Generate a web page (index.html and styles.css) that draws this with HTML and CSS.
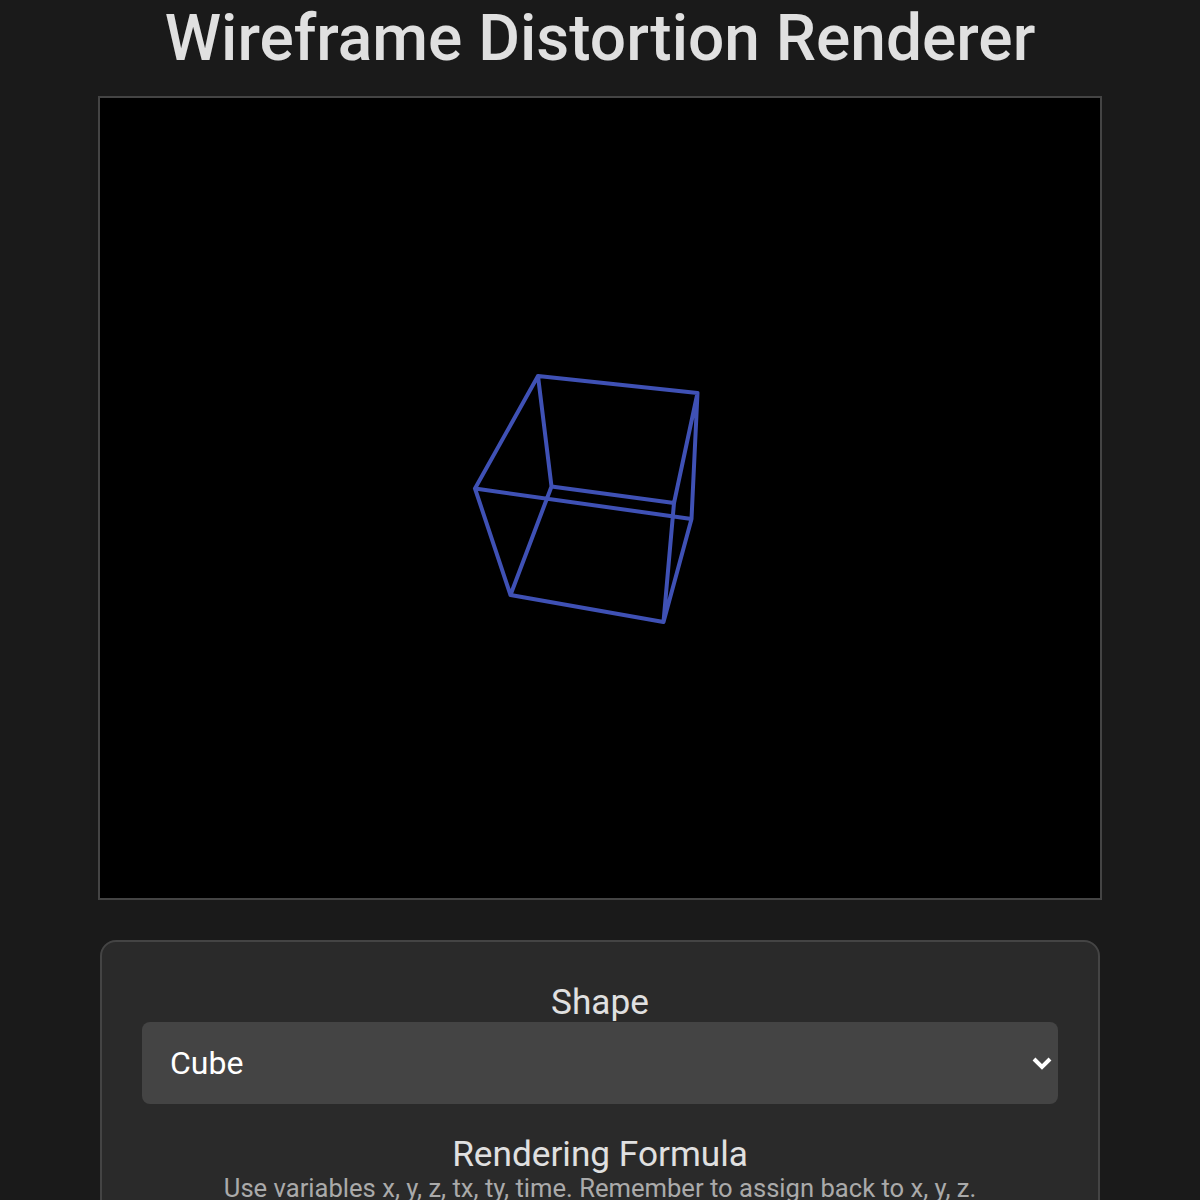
FILE: index.html
```html
<!DOCTYPE html>
<html lang="en">
  <head>
    <meta charset="UTF-8" />
    <meta name="viewport" content="width=device-width, initial-scale=1.0" />
    <title>Wireframe Distortion Renderer</title>
    <link rel="stylesheet" href="styles.css">
  </head>
  <body>
    <div class="page">
      <h1 class="title">Wireframe Distortion Renderer</h1>
      <div class="stage">
        <!-- coords are page px minus the canvas origin (100, 98) -->
        <svg class="wireframe" viewBox="0 0 1000 800" width="1000" height="800">
          <path d="M438 278 L597.5 295 M438 278 L375 390.5 M438 278 L451.5 388.5
                   M597.5 295 L574 405 M597.5 295 L591.5 421 M375 390.5 L591.5 421
                   M375 390.5 L410.5 497 M451.5 388.5 L574 405 M451.5 388.5 L410.5 497
                   M574 405 L563.5 524 M591.5 421 L563.5 524 M410.5 497 L563.5 524" />
        </svg>
      </div>
      <section class="controls">
        <div class="field">
          <label class="field-label" for="shape">Shape</label>
          <div class="select-wrap">
            <select class="select" id="shape">
              <option>Cube</option>
              <option>Sphere</option>
              <option>Torus</option>
            </select>
            <svg class="chevron" viewBox="0 0 20 14" width="20" height="14">
              <path d="M2 3 L10 11 L18 3" />
            </svg>
          </div>
        </div>
        <div class="field">
          <label class="field-label">Rendering Formula</label>
          <p class="hint">Use variables x, y, z, tx, ty, time. Remember to assign back to x, y, z.</p>
        </div>
      </section>
    </div>
  </body>
</html>
```
FILE: styles.css
```css
html,
body {
  margin: 0;
  background: #1a1a1a;
}

.page {
  display: flex;
  flex-direction: column;
  align-items: center;
  height: 1200px;
  overflow: hidden;
  font-family: Roboto, "Liberation Sans", sans-serif;
  color: #e0e0e0;
}

.title {
  margin: 0;
  height: 96px;
  line-height: 78px;
  font-size: 64px;
  font-weight: 500;
  text-align: center;
  flex-shrink: 0;
}

.stage {
  box-sizing: border-box;
  width: 1004px;
  height: 804px;
  border: 2px solid #444;
  background: #000;
  flex-shrink: 0;
}

.wireframe {
  display: block;
}

.wireframe path {
  fill: none;
  stroke: #3f51b5;
  stroke-width: 4;
  stroke-linecap: round;
  stroke-linejoin: round;
}

.controls {
  box-sizing: border-box;
  width: 1000px;
  margin-top: 40px;
  padding: 40px;
  border: 2px solid #444;
  border-radius: 16px;
  background: #2a2a2a;
  flex-shrink: 0;
}

.field {
  display: flex;
  flex-direction: column;
  align-items: center;
  margin-bottom: 30px;
}

.field-label {
  font-size: 35.2px;
  line-height: 40px;
}

.select-wrap {
  position: relative;
  width: 100%;
}

.select {
  display: block;
  box-sizing: border-box;
  width: 100%;
  height: 82px;
  padding: 0 28px;
  border: none;
  border-radius: 8px;
  appearance: none;
  background: #444;
  color: #fff;
  font-family: inherit;
  font-size: 32px;
}

.chevron {
  position: absolute;
  top: 34px;
  right: 6px;
}

.chevron path {
  fill: none;
  stroke: #fff;
  stroke-width: 4;
}

.hint {
  margin: 0;
  font-size: 25.6px;
  line-height: 28px;
  color: #aaa;
}
```
